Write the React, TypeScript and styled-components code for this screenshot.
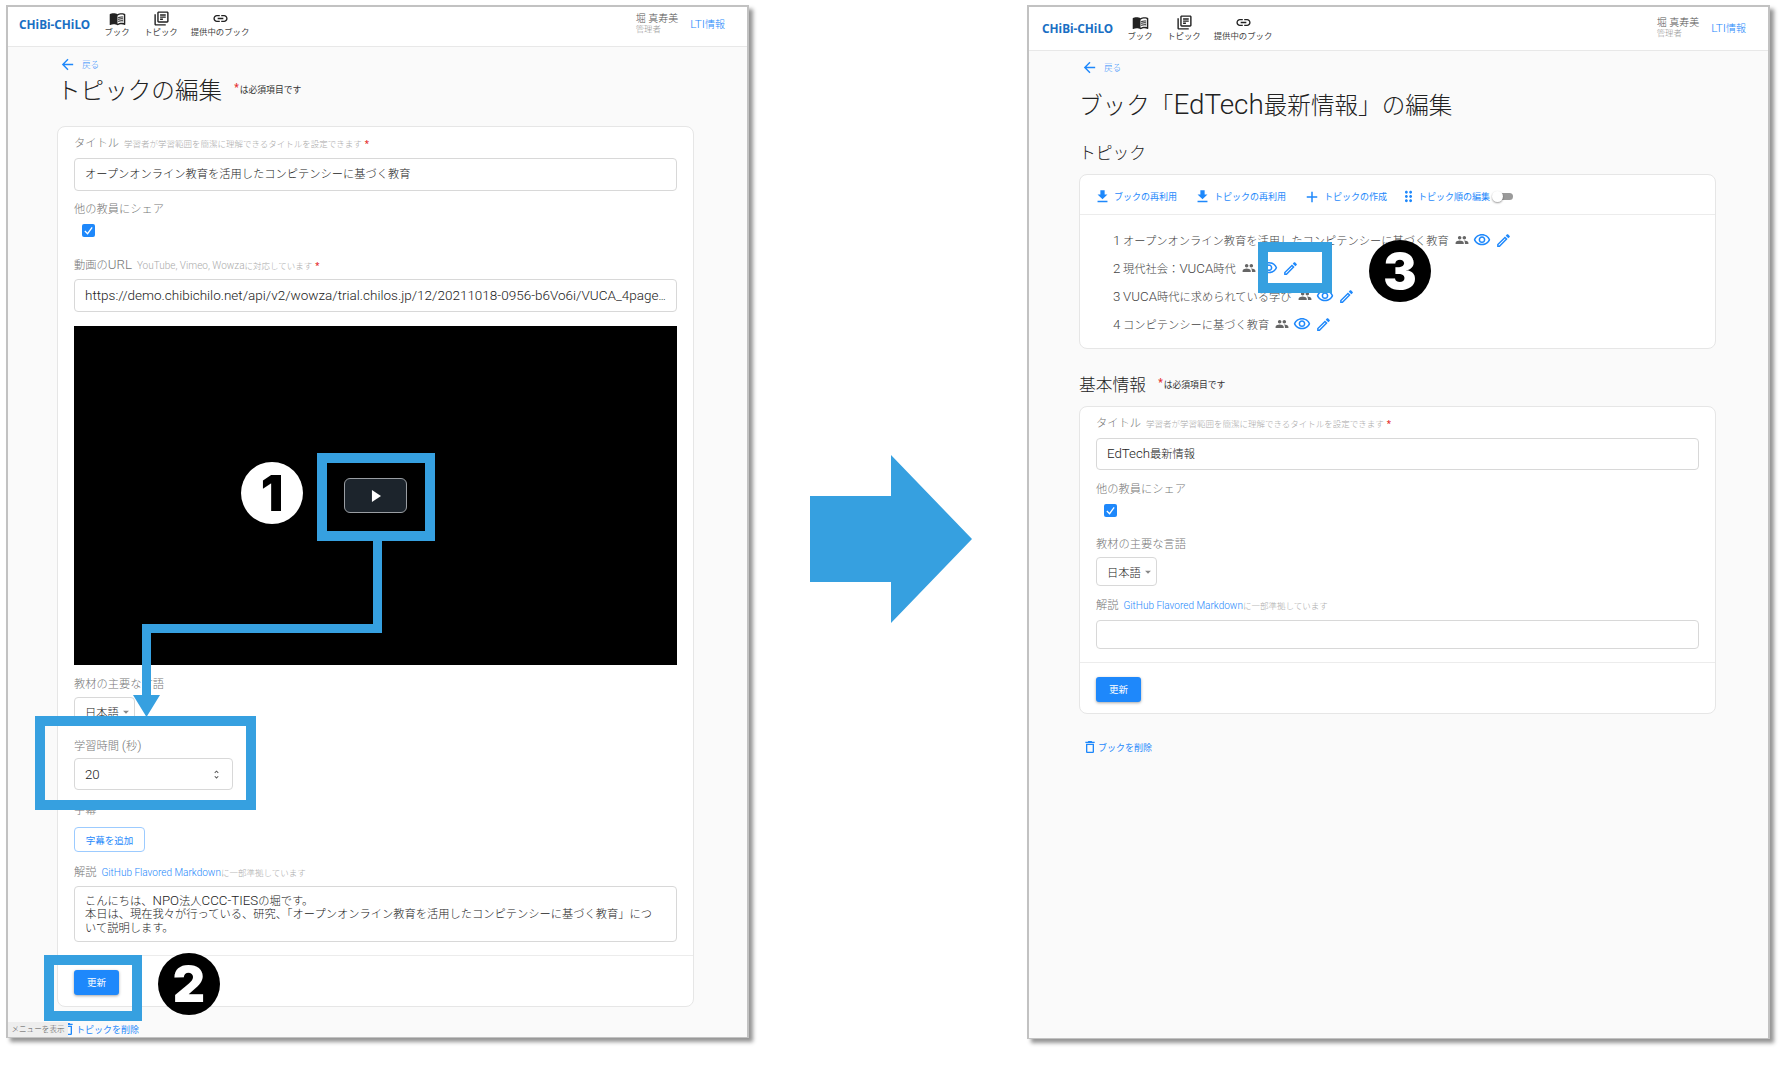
import React from 'react';
import styled, { createGlobalStyle } from 'styled-components';
import {
  MdAdd,
  MdArrowBack,
  MdArrowDropDown,
  MdDragIndicator,
  MdFileDownload,
  MdLink,
  MdMenuBook,
  MdOutlineDelete,
  MdOutlineEdit,
  MdOutlineLibraryBooks,
  MdOutlineVisibility,
  MdPeople,
  MdUnfoldMore,
} from 'react-icons/md';

const BLUE = '#1e88fb';
const MARK = '#36a0e0';

const GlobalStyle = createGlobalStyle`
  html, body { margin: 0; padding: 0; background: #fff; }
  body { font-family: Roboto, "Noto Sans CJK JP", sans-serif; font-weight: 300; color: #333; }
`;

const Canvas = styled.div`
  position: relative;
  width: 1784px;
  height: 1066px;
  overflow: hidden;
`;

const Window = styled.div<{ $left: number; $height: number }>`
  position: absolute;
  left: ${(p) => p.$left}px;
  top: 5px;
  width: 743px;
  height: ${(p) => p.$height}px;
  box-sizing: border-box;
  border: 2px solid #c2c2c2;
  border-bottom-width: 1px;
  background: #fafafa;
  box-shadow: 4px 4px 4px rgba(0, 0, 0, 0.42);
  overflow: hidden;
`;

// latin runs are set larger than the kana/kanji around them, as in the screenshot
const Latin = styled.span`
  font-size: 1.18em;
`;

const UrlText = styled(Latin)`
  font-size: 1.2em;
`;

const Header = styled.header<{ $height: number; $left: number; $lift: number }>`
  display: flex;
  align-items: center;
  height: ${(p) => p.$height}px;
  box-sizing: border-box;
  padding: 0 22px ${(p) => p.$lift}px ${(p) => p.$left}px;
  background: #fff;
  border-bottom: 1px solid #e8e8e8;
`;

const Logo = styled.span`
  width: 72px;
  font-family: "Noto Sans", sans-serif;
  font-size: 11.8px;
  font-weight: 700;
  color: #1a6fc4;
  white-space: nowrap;
`;

const Nav = styled.nav`
  display: flex;
  margin-left: 6px;
`;

const NavItem = styled.a<{ $width: number }>`
  display: flex;
  flex-direction: column;
  align-items: center;
  width: ${(p) => p.$width}px;
  font-size: 8.4px;
  line-height: 11px;
  color: #444;
  font-weight: 400;
  white-space: nowrap;
  svg { display: block; font-size: 17px; color: #222; }
`;

const UserBlock = styled.div`
  margin-left: auto;
  display: flex;
  flex-direction: column;
  margin-right: 12px;
  font-size: 10px;
  line-height: 11px;
  color: #555;
  small { font-size: 8.4px; color: #999; }
`;

const LtiLink = styled.a`
  font-size: 10px;
  color: ${BLUE};
`;

const Main = styled.main<{ $top: number; $left: number }>`
  padding: ${(p) => p.$top}px ${(p) => 102 - p.$left}px 0 ${(p) => p.$left}px;
`;

const BackLink = styled.a`
  display: flex;
  align-items: center;
  height: 14px;
  margin-left: 2px;
  gap: 6px;
  font-size: 8.6px;
  color: ${BLUE};
  svg { font-size: 17px; }
`;

const TitleRow = styled.div<{ $top: number; $height: number }>`
  display: flex;
  align-items: center;
  height: ${(p) => p.$height}px;
  margin-top: ${(p) => p.$top}px;
`;

const PageTitle = styled.h1`
  margin: 0;
  font-size: 23.6px;
  font-weight: 300;
  color: #222;
  white-space: nowrap;
`;

const SectionTitle = styled.h2`
  margin: 0;
  font-size: 16.8px;
  font-weight: 300;
  color: #222;
  white-space: nowrap;
`;

const RequiredNote = styled.span`
  margin-left: 12px;
  font-size: 8.8px;
  font-weight: 400;
  color: #333;
  white-space: nowrap;
  b { color: #e53030; font-size: 10px; margin-right: 1px; vertical-align: 2px; }
`;

const Card = styled.section<{ $top: number }>`
  margin-top: ${(p) => p.$top}px;
  background: #fff;
  border: 1px solid #e6e6e6;
  border-radius: 8px;
`;

const CardBody = styled.div<{ $top: number }>`
  padding: ${(p) => p.$top}px 16px 0;
`;

const Field = styled.div<{ $top?: number }>`
  display: flex;
  flex-direction: column;
  align-items: flex-start;
  margin-top: ${(p) => p.$top ?? 0}px;
`;

const Label = styled.div`
  height: 14px;
  margin-bottom: 6px;
  font-size: 11.25px;
  line-height: 15px;
  color: #777;
  white-space: nowrap;
`;

const Hint = styled.span`
  margin-left: 5px;
  font-size: 8.5px;
  color: #aaa;
  a { color: ${BLUE}; }
`;

const Asterisk = styled.b`
  margin-left: 3px;
  color: #e53030;
  font-size: 9px;
  font-weight: 700;
`;

const InputBox = styled.div<{ $height: number }>`
  width: 100%;
  height: ${(p) => p.$height}px;
  margin-top: 2px;
  box-sizing: border-box;
  padding: 0 10px;
  border: 1px solid #d8d8d8;
  border-radius: 4px;
  background: #fff;
  font-size: 11.25px;
  line-height: ${(p) => p.$height - 2}px;
  color: #222;
  white-space: nowrap;
  overflow: hidden;
  text-overflow: ellipsis;
`;

const TextBlock = styled.div<{ $height: number; $top: number }>`
  width: 100%;
  height: ${(p) => p.$height}px;
  margin-top: ${(p) => p.$top}px;
  box-sizing: border-box;
  padding: 7px 16px 7px 10px;
  border: 1px solid #d8d8d8;
  border-radius: 4px;
  background: #fff;
  font-size: 11.25px;
  line-height: 13.4px;
  color: #222;
`;

const CheckRow = styled.div`
  height: 22px;
  margin-top: 2px;
  padding-left: 8px;
`;

const CheckBox = styled.span`
  display: flex;
  align-items: center;
  justify-content: center;
  width: 13px;
  height: 13px;
  border-radius: 2px;
  background: ${BLUE};
  svg { width: 11px; height: 11px; }
`;

const VideoFrame = styled.div`
  display: flex;
  align-items: center;
  justify-content: center;
  height: 339px;
  margin-top: 14px;
  background: #000;
`;

const PlayButton = styled.button`
  display: flex;
  align-items: center;
  justify-content: center;
  width: 63px;
  height: 35px;
  padding: 0;
  border: 1px solid #9a9ea3;
  border-radius: 6px;
  background: #1c242c;
  svg { width: 10px; height: 12px; }
`;

const SelectBox = styled.div`
  display: inline-flex;
  align-items: center;
  width: 61px;
  height: 29px;
  box-sizing: border-box;
  padding: 0 0 0 10px;
  border: 1px solid #d8d8d8;
  border-radius: 4px;
  background: #fff;
  font-size: 11.25px;
  color: #222;
  white-space: nowrap;
  svg { font-size: 14px; color: #888; flex: none; }
`;

const NumberBox = styled.div`
  display: flex;
  align-items: center;
  justify-content: space-between;
  width: 159px;
  height: 32px;
  box-sizing: border-box;
  padding: 0 10px;
  border: 1px solid #d8d8d8;
  border-radius: 4px;
  background: #fff;
  font-size: 11.25px;
  color: #222;
  svg { font-size: 11px; color: #555; }
`;

const OutlineButton = styled.button`
  display: block;
  width: 71px;
  height: 25px;
  margin-top: 4px;
  padding: 0;
  border: 1px solid #9ccbff;
  border-radius: 4px;
  background: #fff;
  font: 400 9.5px Roboto, "Noto Sans CJK JP", sans-serif;
  color: ${BLUE};
`;

const CardFooter = styled.div<{ $top: number }>`
  margin-top: ${(p) => p.$top}px;
  padding: 14px 16px 11px;
  border-top: 1px solid #ececec;
`;

const PrimaryButton = styled.button`
  display: block;
  width: 45px;
  height: 25px;
  padding: 0 0 2px;
  border: 0;
  border-radius: 3px;
  background: ${BLUE};
  box-shadow: 0 1px 3px rgba(0, 0, 0, 0.35);
  font: 400 9.5px Roboto, "Noto Sans CJK JP", sans-serif;
  color: #fff;
`;

const DeleteLink = styled.a<{ $top: number }>`
  display: flex;
  align-items: center;
  height: 14px;
  margin-top: ${(p) => p.$top}px;
  margin-left: 3px;
  font-size: 9px;
  font-weight: 400;
  color: ${BLUE};
  svg { font-size: 16px; }
`;

const MenuHint = styled.span`
  position: absolute;
  left: 0;
  bottom: 0;
  width: 60px;
  height: 15px;
  background: #eee;
  font-size: 7.6px;
  line-height: 15px;
  text-align: center;
  color: #555;
`;

const ToolBar = styled.div`
  display: flex;
  align-items: center;
  height: 40px;
  box-sizing: border-box;
  padding: 4px 0 0 14px;
  border-bottom: 1px solid #ececec;
`;

const ToolLink = styled.a<{ $gap: number; $icon: number; $inner: number }>`
  display: flex;
  align-items: center;
  gap: ${(p) => p.$inner}px;
  margin-right: ${(p) => p.$gap}px;
  font-size: 9px;
  font-weight: 400;
  color: ${BLUE};
  white-space: nowrap;
  svg { font-size: ${(p) => p.$icon}px; }
`;

const ToggleTrack = styled.span`
  position: relative;
  display: inline-block;
  width: 19px;
  height: 7px;
  margin-left: 3px;
  border-radius: 4px;
  background: #9a9a9a;
`;

const ToggleKnob = styled.span`
  position: absolute;
  left: -2px;
  top: -2px;
  width: 11px;
  height: 11px;
  border-radius: 50%;
  background: #fff;
  box-shadow: 0 1px 2px rgba(0, 0, 0, 0.4);
`;

const TopicList = styled.ol`
  margin: 0;
  padding: 11px 0 10px 33px;
  list-style: none;
`;

const TopicRow = styled.li`
  display: flex;
  align-items: center;
  height: 28px;
  font-size: 11.25px;
  color: #444;
  white-space: pre;
`;

const IconGroup = styled.span`
  display: inline-flex;
  align-items: center;
  gap: 4px;
  margin-left: 6px;
  svg { display: block; }
`;

const PeopleIcon = styled(MdPeople)`
  font-size: 14px;
  color: #666;
`;

const ViewIcon = styled(MdOutlineVisibility)`
  font-size: 18px;
  color: ${BLUE};
`;

const EditIcon = styled(MdOutlineEdit)`
  font-size: 17px;
  color: ${BLUE};
`;

const MarkBox = styled.div<{ $x: number; $y: number; $w: number; $h: number }>`
  position: absolute;
  left: ${(p) => p.$x}px;
  top: ${(p) => p.$y}px;
  width: ${(p) => p.$w}px;
  height: ${(p) => p.$h}px;
  box-sizing: border-box;
  border: 10px solid ${MARK};
`;

const StepBadge = styled.div<{ $x: number; $y: number; $light?: boolean }>`
  position: absolute;
  left: ${(p) => p.$x}px;
  top: ${(p) => p.$y}px;
  width: 62px;
  height: 62px;
  display: flex;
  align-items: center;
  justify-content: center;
  border-radius: 50%;
  background: ${(p) => (p.$light ? '#fff' : '#000')};
  color: ${(p) => (p.$light ? '#000' : '#fff')};
  font: 900 50px/1 Inter, "Liberation Sans", sans-serif;
`;

const OverlaySvg = styled.svg<{ $x: number; $y: number }>`
  position: absolute;
  left: ${(p) => p.$x}px;
  top: ${(p) => p.$y}px;
  display: block;
`;

const Check = () => (
  <svg viewBox="0 0 12 12" fill="none" stroke="#fff" strokeWidth="1.4">
    <path d="M2 6.5 5 9.5 10 2.5" />
  </svg>
);

const Required = () => <Asterisk>*</Asterisk>;

const MarkdownHint = () => (
  <Hint>
    <a>
      <Latin>GitHub Flavored Markdown</Latin>
    </a>
    に一部準拠しています
  </Hint>
);

const AppHeader: React.FC<{ height: number; left: number; lift: number }> = ({ height, left, lift }) => (
  <Header $height={height} $left={left} $lift={lift}>
    <Logo>CHiBi-CHiLO</Logo>
    <Nav>
      <NavItem $width={40}>
        <MdMenuBook />
        ブック
      </NavItem>
      <NavItem $width={48}>
        <MdOutlineLibraryBooks />
        トピック
      </NavItem>
      <NavItem $width={70}>
        <MdLink />
        提供中のブック
      </NavItem>
    </Nav>
    <UserBlock>
      <span>堀 真寿美</span>
      <small>管理者</small>
    </UserBlock>
    <LtiLink>
      <Latin>LTI</Latin>情報
    </LtiLink>
  </Header>
);

const topics: React.ReactNode[] = [
  'オープンオンライン教育を活用したコンピテンシーに基づく教育',
  <>
    現代社会：<Latin>VUCA</Latin>時代
  </>,
  <>
    <Latin>VUCA</Latin>時代に求められている学び
  </>,
  'コンピテンシーに基づく教育',
];

const TopicForm = () => (
  <Window $left={6} $height={1033}>
    <AppHeader height={40} left={11} lift={6} />
    <Main $top={10} $left={49}>
      <BackLink>
        <MdArrowBack />
        戻る
      </BackLink>
      <TitleRow $top={3} $height={30}>
        <PageTitle>トピックの編集</PageTitle>
        <RequiredNote>
          <b>*</b>は必須項目です
        </RequiredNote>
      </TitleRow>
      <Card $top={22}>
        <CardBody $top={9}>
          <Field>
            <Label>
              タイトル<Hint>学習者が学習範囲を簡潔に理解できるタイトルを設定できます</Hint>
              <Required />
            </Label>
            <InputBox $height={33}>オープンオンライン教育を活用したコンピテンシーに基づく教育</InputBox>
          </Field>
          <Field $top={11}>
            <Label>他の教員にシェア</Label>
            <CheckRow>
              <CheckBox>
                <Check />
              </CheckBox>
            </CheckRow>
          </Field>
          <Field $top={11}>
            <Label>
              動画の<Latin>URL</Latin>
              <Hint>
                <Latin>YouTube, Vimeo, Wowza</Latin>に対応しています
              </Hint>
              <Required />
            </Label>
            <InputBox $height={33}>
              <UrlText>https://demo.chibichilo.net/api/v2/wowza/trial.chilos.jp/12/20211018-0956-b6Vo6i/VUCA_4pages.mp4</UrlText>
            </InputBox>
          </Field>
          <VideoFrame>
            <PlayButton>
              <svg viewBox="0 0 11 13">
                <path d="M1 0 11 6.500 1 13Z" fill="#fff" />
              </svg>
            </PlayButton>
          </VideoFrame>
          <Field $top={12}>
            <Label>教材の主要な言語</Label>
            <SelectBox>
              日本語
              <MdArrowDropDown />
            </SelectBox>
          </Field>
          <Field $top={12}>
            <Label>
              学習時間 <Latin>(</Latin>秒<Latin>)</Latin>
            </Label>
            <NumberBox>
              <Latin>20</Latin>
              <MdUnfoldMore />
            </NumberBox>
          </Field>
          <Field $top={13}>
            <Label>字幕</Label>
            <OutlineButton>字幕を追加</OutlineButton>
          </Field>
          <Field $top={13}>
            <Label>
              解説
              <MarkdownHint />
            </Label>
            <TextBlock $height={56} $top={1}>
              こんにちは、<Latin>NPO</Latin>法人<Latin>CCC-TIES</Latin>の堀です。
              <br />
              本日は、現在我々が行っている、研究、「オープンオンライン教育を活用したコンピテンシーに基づく教育」について説明します。
            </TextBlock>
          </Field>
        </CardBody>
        <CardFooter $top={13}>
          <PrimaryButton>更新</PrimaryButton>
        </CardFooter>
      </Card>
      <DeleteLink $top={15}>
        <MdOutlineDelete />
        トピックを削除
      </DeleteLink>
    </Main>
    <MenuHint>メニューを表示</MenuHint>
  </Window>
);

const BookForm = () => (
  <Window $left={1027} $height={1034}>
    <AppHeader height={44} left={13} lift={2} />
    <Main $top={9} $left={50}>
      <BackLink>
        <MdArrowBack />
        戻る
      </BackLink>
      <TitleRow $top={13} $height={34}>
        <PageTitle>
          ブック「<Latin>EdTech</Latin>最新情報」の編集
        </PageTitle>
      </TitleRow>
      <TitleRow $top={19} $height={24}>
        <SectionTitle>トピック</SectionTitle>
      </TitleRow>
      <Card $top={10}>
        <ToolBar>
          <ToolLink $gap={17} $icon={17} $inner={3}>
            <MdFileDownload />
            ブックの再利用
          </ToolLink>
          <ToolLink $gap={17} $icon={17} $inner={3}>
            <MdFileDownload />
            トピックの再利用
          </ToolLink>
          <ToolLink $gap={13} $icon={18} $inner={3}>
            <MdAdd />
            トピックの作成
          </ToolLink>
          <ToolLink $gap={0} $icon={17} $inner={1}>
            <MdDragIndicator />
            トピック順の編集
            <ToggleTrack>
              <ToggleKnob />
            </ToggleTrack>
          </ToolLink>
        </ToolBar>
        <TopicList>
          {topics.map((topic, i) => (
            <TopicRow key={i}>
              <span>
                <Latin>{i + 1}</Latin> {topic}
              </span>
              <IconGroup>
                <PeopleIcon />
                <ViewIcon />
                <EditIcon />
              </IconGroup>
            </TopicRow>
          ))}
        </TopicList>
      </Card>
      <TitleRow $top={23} $height={24}>
        <SectionTitle>基本情報</SectionTitle>
        <RequiredNote>
          <b>*</b>は必須項目です
        </RequiredNote>
      </TitleRow>
      <Card $top={10}>
        <CardBody $top={9}>
          <Field>
            <Label>
              タイトル<Hint>学習者が学習範囲を簡潔に理解できるタイトルを設定できます</Hint>
              <Required />
            </Label>
            <InputBox $height={32}>
              <Latin>EdTech</Latin>最新情報
            </InputBox>
          </Field>
          <Field $top={12}>
            <Label>他の教員にシェア</Label>
            <CheckRow>
              <CheckBox>
                <Check />
              </CheckBox>
            </CheckRow>
          </Field>
          <Field $top={11}>
            <Label>教材の主要な言語</Label>
            <SelectBox>
              日本語
              <MdArrowDropDown />
            </SelectBox>
          </Field>
          <Field $top={12}>
            <Label>
              解説
              <MarkdownHint />
            </Label>
            <TextBlock $height={29} $top={2} />
          </Field>
        </CardBody>
        <CardFooter $top={13}>
          <PrimaryButton>更新</PrimaryButton>
        </CardFooter>
      </Card>
      <DeleteLink $top={26}>
        <MdOutlineDelete />
        ブックを削除
      </DeleteLink>
    </Main>
  </Window>
);

const App = () => (
  <>
    <GlobalStyle />
    <Canvas>
      <TopicForm />
      <BookForm />

      <MarkBox $x={317} $y={453} $w={118} $h={88} />
      <MarkBox $x={35} $y={716} $w={221} $h={94} />
      <MarkBox $x={44} $y={955} $w={98} $h={66} />
      <MarkBox $x={1258} $y={242} $w={74} $h={51} />

      <OverlaySvg $x={130} $y={540} width={255} height={180} viewBox="0 0 255 180">
        <path d="M243 0h9v93H21v62h9L16.500 177 3 155h9V84h231Z" fill={MARK} />
      </OverlaySvg>

      <OverlaySvg $x={810} $y={455} width={162} height={168} viewBox="0 0 162 168">
        <path d="M0 41h81V0l81 84-81 84v-41H0Z" fill={MARK} />
      </OverlaySvg>

      <StepBadge $x={241} $y={462} $light>1</StepBadge>
      <StepBadge $x={158} $y={953}>2</StepBadge>
      <StepBadge $x={1369} $y={240}>3</StepBadge>
    </Canvas>
  </>
);

export default App;
